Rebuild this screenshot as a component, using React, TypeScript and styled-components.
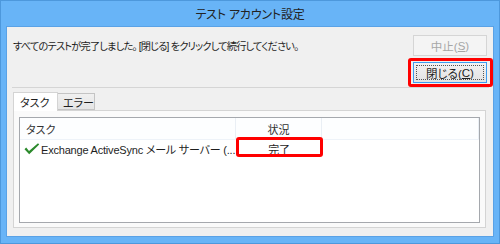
import React from "react";
import styled, { createGlobalStyle } from "styled-components";

const GlobalStyle = createGlobalStyle`
  html, body { margin: 0; padding: 0; }
  body {
    width: 500px;
    height: 244px;
    overflow: hidden;
    font-family: "Liberation Sans", "Noto Sans CJK JP", sans-serif;
    font-feature-settings: "palt";
    color: #1e1e1e;
  }
`;

const Window = styled.div`
  box-sizing: border-box;
  width: 500px;
  height: 244px;
  background: #68b4f7;
  border: 1px solid #4d98dc;
  display: flex;
  flex-direction: column;
  padding: 0 5px 6px 5px;
`;

const TitleBar = styled.div`
  height: 25px;
  display: flex;
  align-items: center;
  justify-content: center;
  font-size: 12px;
  color: #222;
  letter-spacing: -0.2px;
`;

const Client = styled.div`
  flex: 1;
  box-sizing: border-box;
  background: #f0f0f0;
  border: 1px solid #5aa2e6;
  display: flex;
  flex-direction: column;
  padding: 8px 6px 8px 6px;
  min-height: 0;
`;

const TopRow = styled.div`
  display: flex;
  align-items: center;
  justify-content: space-between;
`;

const Message = styled.div`
  font-size: 10.2px;
  letter-spacing: -0.8px;
  padding-bottom: 1px;
  white-space: nowrap;
`;

const ButtonRow = styled.div`
  display: flex;
  justify-content: flex-end;
  margin-top: 6px;
`;

const Highlight = styled.div`
  position: relative;
  &::after {
    content: "";
    position: absolute;
    left: -5px;
    right: -6px;
    top: -4px;
    bottom: -4px;
    border: 3px solid #ff0000;
    border-radius: 3px;
    pointer-events: none;
  }
`;

const Button = styled.button<{ $default?: boolean }>`
  box-sizing: border-box;
  width: 74px;
  height: 21px;
  padding: 0;
  margin: 0;
  font-family: inherit;
  font-feature-settings: "palt";
  font-size: 11.5px;
  color: ${(p) => (p.disabled ? "#a6a6a6" : "#1e1e1e")};
  border: 1px solid ${(p) => (p.disabled ? "#d5d5d5" : p.$default ? "#3c9bf0" : "#acacac")};
  background: ${(p) =>
    p.disabled ? "#f4f4f4" : "linear-gradient(#f2f2f2, #e3e3e3)"};
  display: flex;
  align-items: center;
  justify-content: center;
  position: relative;
  ${(p) =>
    p.$default
      ? `&::before {
    content: "";
    position: absolute;
    inset: 2px;
    border: 1px dotted #555;
  }`
      : ""}
  & u { text-decoration: underline; text-underline-offset: 1px; }
`;

const Separator = styled.div`
  height: 1px;
  background: #d5d5d5;
  margin: 4px -2px 0 -1px;
`;

const TabStrip = styled.div`
  display: flex;
  align-items: flex-end;
  margin-top: 4px;
  height: 18px;
  position: relative;
  z-index: 1;
`;

const Tab = styled.div<{ $active?: boolean }>`
  box-sizing: border-box;
  font-size: 11px;
  white-space: nowrap;
  display: flex;
  align-items: center;
  padding: 0 0 0 ${(p) => (p.$active ? "6px" : "5px")};
  height: ${(p) => (p.$active ? "19px" : "17px")};
  margin-bottom: ${(p) => (p.$active ? "-1px" : "0")};
  background: ${(p) => (p.$active ? "#ffffff" : "linear-gradient(#f0f0f0, #e5e5e5)")};
  border: 1px solid ${(p) => (p.$active ? "#d4d4d4" : "#c4c4c4")};
  border-bottom: ${(p) => (p.$active ? "none" : "1px solid #c4c4c4")};
  border-left: ${(p) => (p.$active ? "1px solid #d4d4d4" : "none")};
  width: ${(p) => (p.$active ? "45px" : "37px")};
`;

const TabPanel = styled.div`
  flex: 1;
  box-sizing: border-box;
  background: #fafafa;
  border: 1px solid #d4d4d4;
  margin-right: 1px;
  padding: 6px 5px 4px 5px;
  display: flex;
  flex-direction: column;
  min-height: 0;
`;

const ListView = styled.div`
  flex: 1;
  box-sizing: border-box;
  background: #ffffff;
  border: 1px solid #a5a8ad;
  display: flex;
  flex-direction: column;
`;

const HeaderRow = styled.div`
  display: grid;
  grid-template-columns: 216px 86px 1fr;
  height: 21px;
  border-bottom: 1px solid #eef3f9;
  background: #fdfeff;
`;

const HeaderCell = styled.div<{ $center?: boolean }>`
  font-size: 11px;
  display: flex;
  align-items: center;
  justify-content: ${(p) => (p.$center ? "center" : "flex-start")};
  padding-left: ${(p) => (p.$center ? "0" : "6px")};
  border-right: 1px solid #eaeff5;
  color: #333;
`;

const Row = styled.div`
  display: grid;
  grid-template-columns: 216px 86px 1fr;
  height: 17px;
`;

const Cell = styled.div<{ $center?: boolean; $marked?: boolean }>`
  font-size: 11px;
  letter-spacing: -0.2px;
  display: flex;
  align-items: center;
  justify-content: ${(p) => (p.$center ? "center" : "flex-start")};
  padding-left: ${(p) => (p.$center ? "0" : "4px")};
  gap: 1px;
  white-space: nowrap;
  overflow: hidden;
  position: relative;
  & svg { flex-shrink: 0; }
  ${(p) =>
    p.$marked
      ? `overflow: visible;
  &::after {
    content: "";
    position: absolute;
    left: 0;
    right: -1px;
    top: -3px;
    bottom: 0;
    border: 3px solid #ff0000;
    border-radius: 3px;
  }`
      : ""}
`;

const Check = () => (
  <svg width="16" height="12" viewBox="0 0 16 12">
    <path d="M0.5 6.2 L2.2 4.6 L5 8 L14 0.3 L15.2 1.4 L5.2 11.2 Z" fill="#2c8a2c" />
  </svg>
);

export default function App() {
  return (
    <>
      <GlobalStyle />
      <Window>
        <TitleBar>テスト アカウント設定</TitleBar>
        <Client>
          <TopRow>
            <Message>すべてのテストが完了しました。 [閉じる] をクリックして続行してください。</Message>
            <Button disabled>
              中止(<u>S</u>)
            </Button>
          </TopRow>
          <ButtonRow>
            <Highlight>
              <Button $default>
                閉じる(<u>C</u>)
              </Button>
            </Highlight>
          </ButtonRow>
          <Separator />
          <TabStrip>
            <Tab $active>タスク</Tab>
            <Tab>エラー</Tab>
          </TabStrip>
          <TabPanel>
            <ListView>
              <HeaderRow>
                <HeaderCell>タスク</HeaderCell>
                <HeaderCell $center>状況</HeaderCell>
                <HeaderCell />
              </HeaderRow>
              <Row>
                <Cell>
                  <Check />
                  Exchange ActiveSync メール サーバー (...
                </Cell>
                <Cell $center $marked>
                  完了
                </Cell>
                <Cell />
              </Row>
            </ListView>
          </TabPanel>
        </Client>
      </Window>
    </>
  );
}
